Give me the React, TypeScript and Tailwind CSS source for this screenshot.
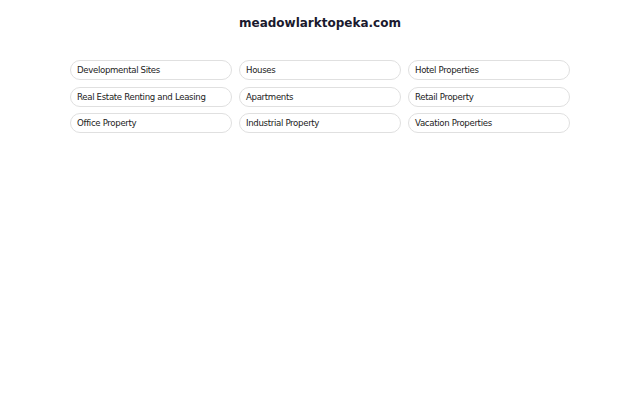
import React from "react";

const items = [
  "Developmental Sites",
  "Houses",
  "Hotel Properties",
  "Real Estate Renting and Leasing",
  "Apartments",
  "Retail Property",
  "Office Property",
  "Industrial Property",
  "Vacation Properties",
];

export default function App() {
  return (
    <div className="w-[640px] h-[400px] bg-white" style={{ fontFamily: '"DejaVu Sans", sans-serif' }}>
      <div className="pt-[14px] flex justify-center">
        <h1 className="text-[12px] leading-[18px] font-bold text-[#1a1a2e]">meadowlarktopeka.com</h1>
      </div>
      <div className="mx-[70px] mt-[28px] grid grid-cols-3 gap-x-[7px] gap-y-[6.5px]">
        {items.map((t) => (
          <div
            key={t}
            className="h-[20px] rounded-full border border-[#e0e0e0] flex items-center pl-[6px] pt-[1px] text-[8.6px] tracking-[-0.33px] text-[#222]"
          >
            {t}
          </div>
        ))}
      </div>
    </div>
  );
}
